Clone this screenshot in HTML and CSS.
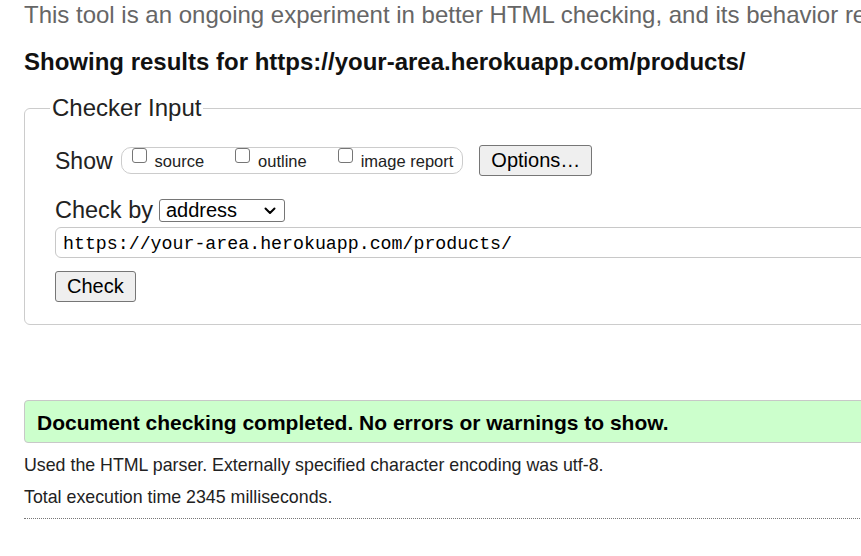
FILE: index.html
```html
<!DOCTYPE html>
<html lang="en">
<head>
<meta charset="utf-8">
<title>Showing results for https://your-area.herokuapp.com/products/ - Nu Html Checker</title>
<link rel="stylesheet" href="styles.css">
</head>
<body>
<p class="intro">This tool is an ongoing experiment in better HTML checking, and its behavior remains subject to change</p>
<h2 class="results-title">Showing results for https://your-area.herokuapp.com/products/</h2>
<form class="checker" onsubmit="return false">
  <fieldset class="checker-input">
    <legend class="legend">Checker Input</legend>
    <div class="row show-row">
      <span class="row-label">Show</span>
      <div class="show-group">
        <label class="opt"><input type="checkbox" class="box"><span class="opt-text">source</span></label>
        <label class="opt"><input type="checkbox" class="box"><span class="opt-text">outline</span></label>
        <label class="opt"><input type="checkbox" class="box"><span class="opt-text">image report</span></label>
      </div>
      <button type="button" class="btn btn-options">Options…</button>
    </div>
    <div class="row checkby-row">
      <span class="row-label">Check by</span>
      <span class="select-wrap">
        <select class="select"><option>address</option><option>file upload</option><option>text input</option></select>
        <svg class="chev" width="12" height="8" viewBox="0 0 12 8" aria-hidden="true"><path d="M1.5 1.5 L6 6 L10.5 1.5" fill="none" stroke="#000" stroke-width="2" stroke-linecap="round" stroke-linejoin="round"/></svg>
      </span>
    </div>
    <div class="row url-row">
      <input type="text" class="url" value="https://your-area.herokuapp.com/products/">
    </div>
    <div class="row submit-row">
      <button type="submit" class="btn btn-check">Check</button>
    </div>
  </fieldset>
</form>
<div class="success">Document checking completed. No errors or warnings to show.</div>
<p class="details">Used the HTML parser. Externally specified character encoding was utf-8.</p>
<p class="details details-time">Total execution time 2345 milliseconds.</p>
<hr class="sep">
</body>
</html>
```

FILE: styles.css
```css
html {
  overflow: hidden;
  background: #fff;
}

body {
  margin: 0;
  padding: 1px 0 0 24px;
  width: 1200px;
  font-family: "Liberation Sans", Arial, sans-serif;
  color: #222;
}

.intro {
  margin: 0;
  font-size: 24px;
  line-height: 28px;
  color: #666;
  white-space: nowrap;
}

.results-title {
  margin: 19px 0 18px;
  font-size: 24px;
  line-height: 28px;
  font-weight: bold;
  color: #111;
  white-space: nowrap;
}

.checker {
  margin: 0;
}

.checker-input {
  margin: 0;
  width: 1000px;
  padding: 23px 0 22px 30px;
  border: 1px solid #ccc;
  border-radius: 6px;
  box-sizing: border-box;
}

.legend {
  margin-left: -5px;
  padding: 0 2px;
  font-size: 24px;
  line-height: 28px;
  color: #222;
}

.row {
  display: flex;
  align-items: flex-start;
}

.row-label {
  font-size: 23px;
  line-height: 26px;
  color: #222;
}

.show-row {
  height: 31px;
}

.show-row .row-label {
  margin-top: 3px;
}

.show-group {
  display: flex;
  gap: 31px;
  margin: 2px 0 0 8px;
  height: 27px;
  box-sizing: border-box;
  padding: 0 9px 0 10px;
  border: 1px solid #ccc;
  border-radius: 10px;
}

.opt {
  display: flex;
  align-items: flex-start;
  gap: 8px;
}

.box {
  appearance: none;
  -webkit-appearance: none;
  margin: 0;
  width: 15px;
  height: 15px;
  border: 1px solid #767676;
  border-radius: 3px;
  background: #fff;
  box-sizing: border-box;
}

.opt-text {
  margin-top: 4px;
  font-size: 16.5px;
  line-height: 19px;
  color: #222;
}

.btn {
  appearance: none;
  -webkit-appearance: none;
  margin: 0;
  height: 31px;
  box-sizing: border-box;
  padding: 0 11px;
  border: 1px solid #767676;
  border-radius: 3px;
  background: #efefef;
  font-family: "Liberation Sans", Arial, sans-serif;
  font-size: 20px;
  line-height: 29px;
  color: #000;
}

.btn-options {
  margin-left: 16px;
}

.checkby-row {
  margin-top: 21px;
}

.checkby-row .row-label {
  font-size: 23.5px;
}

.select-wrap {
  position: relative;
  display: block;
  margin: 2px 0 0 6px;
}

.select {
  appearance: none;
  -webkit-appearance: none;
  display: block;
  margin: 0;
  width: 126px;
  height: 23px;
  box-sizing: border-box;
  padding: 0 0 0 6px;
  border: 1px solid #767676;
  border-radius: 3px;
  background: #fff;
  font-family: "Liberation Sans", Arial, sans-serif;
  font-size: 20px;
  line-height: 21px;
  color: #000;
}

.chev {
  position: absolute;
  right: 9px;
  top: 8px;
  pointer-events: none;
}

.url-row {
  margin-top: 4px;
}

.url {
  margin: 0;
  width: 900px;
  height: 31px;
  box-sizing: border-box;
  padding: 2px 7px 0;
  border: 1px solid #c8c8c8;
  border-radius: 6px;
  font-family: "Liberation Mono", "DejaVu Sans Mono", monospace;
  font-size: 18.25px;
  color: #000;
  background: #fff;
  outline: none;
}

.submit-row {
  margin-top: 13px;
}

.success {
  margin-top: 75px;
  width: 1000px;
  box-sizing: border-box;
  padding: 10px 12px 7px;
  border: 1px solid #c8c8c8;
  border-radius: 4px;
  background: #ccffcc;
  font-size: 21px;
  line-height: 24px;
  font-weight: bold;
  color: #000;
  white-space: nowrap;
}

.details {
  margin: 11px 0 0;
  font-size: 17.8px;
  line-height: 22px;
  color: #222;
}

.details-time {
  margin-top: 10px;
}

.sep {
  margin: 10px 0 0;
  width: 1000px;
  height: 0;
  border: 0;
  border-top: 1px dotted #777;
}
```
